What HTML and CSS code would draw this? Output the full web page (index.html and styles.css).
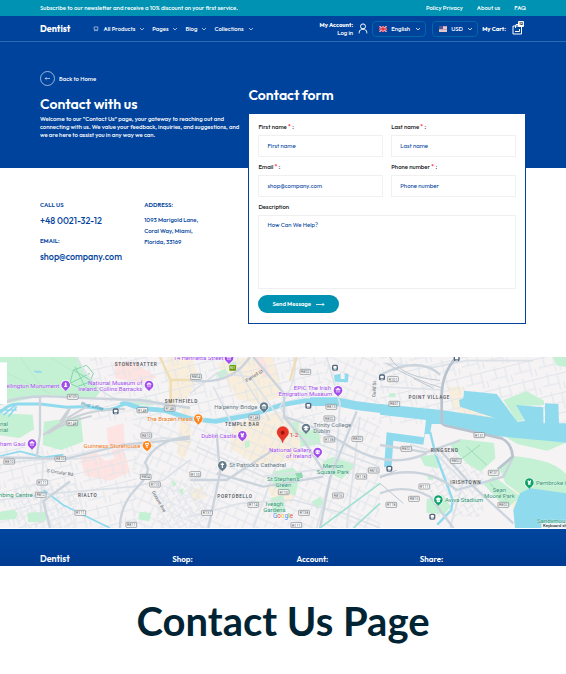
FILE: index.html
```html
<!DOCTYPE html>
<html lang="en">
<head>
<meta charset="utf-8">
<meta name="viewport" content="width=device-width, initial-scale=1">
<title>Contact Us - Dentist</title>
<link rel="stylesheet" href="styles.css">
</head>
<body>
<svg class="sprite" aria-hidden="true">
  <symbol id="chevron" viewBox="0 0 6 6"><path d="M1 2l2 2 2-2" fill="none" stroke="currentColor" stroke-width=".8"/></symbol>
</svg>

<div class="promo">
  <p>Subscribe to our newsletter and receive a 10% discount on your first service.</p>
  <nav class="promo-links" aria-label="Information">
    <a href="#">Policy Privacy</a><a href="#">About us</a><a href="#">FAQ</a>
  </nav>
</div>

<header class="header">
  <a class="logo" href="#">Dentist</a>
  <nav class="menu" aria-label="Main">
    <button type="button"><svg class="tooth" viewBox="0 0 8 8"><path d="M1.500 1.200h5v3.600h-.7v1.600H5V5.200H3v1.200h-.8V4.800h-.7z" fill="none" stroke="currentColor" stroke-width=".7"/></svg>All Products<svg class="chev"><use href="#chevron"/></svg></button>
    <button type="button">Pages<svg class="chev"><use href="#chevron"/></svg></button>
    <button type="button">Blog<svg class="chev"><use href="#chevron"/></svg></button>
    <button type="button">Collections<svg class="chev"><use href="#chevron"/></svg></button>
  </nav>
  <div class="tools">
    <a class="account" href="#">
      <span><b>My Account:</b><br>Log in</span>
      <svg viewBox="0 0 10 11"><g fill="none" stroke="currentColor" stroke-width="1"><circle cx="5" cy="3.400" r="2.500"/><path d="M1.200 10.400V9.600C1.200 7.200 3 6.200 5 6.200s3.800 1 3.800 3.400v.8"/></g></svg>
    </a>
    <label class="picker">
      <svg class="flag" viewBox="0 0 16 12"><path fill="#29337a" d="M0 0h16v12H0z"/><path d="M0 0l16 12M16 0L0 12" stroke="#fff" stroke-width="2.600"/><path d="M0 0l16 12M16 0L0 12" stroke="#d8213b" stroke-width="1.200"/><path d="M8 0v12M0 6h16" stroke="#fff" stroke-width="4.400"/><path d="M8 0v12M0 6h16" stroke="#d8213b" stroke-width="2.600"/></svg>
      <select class="language" aria-label="Language"><option>English</option></select>
      <svg class="chev bold"><use href="#chevron"/></svg>
    </label>
    <label class="picker second">
      <svg class="flag" viewBox="0 0 16 12"><path fill="#eee" d="M0 0h16v12H0z"/><path d="M0 1h16M0 4h16M0 7h16M0 10h16" stroke="#c98a96" stroke-width="1.500"/><path fill="#4b5a94" d="M0 0h8v6H0z"/></svg>
      <select class="currency" aria-label="Currency"><option>USD</option></select>
      <svg class="chev bold"><use href="#chevron"/></svg>
    </label>
    <a class="cart" href="#"><b>My Cart:</b>
      <span class="bag"><svg viewBox="0 0 11 12"><g fill="none" stroke="currentColor"><path d="M1 3h8.500v8H1z"/><path d="M3.500 5V2.500C3.500 1 6.500 1 6.500 2.500M3 8.500h4.500V6"/></g></svg><span class="count">12</span></span>
    </a>
  </div>
</header>

<main class="contact">
  <section class="intro">
    <a class="back" href="#"><svg viewBox="0 0 15 15"><circle cx="7.500" cy="7.500" r="7" fill="none" stroke="currentColor" stroke-width=".6"/><path d="M10 7.500H5.200M6.500 6.200L5.200 7.500l1.300 1.300" fill="none" stroke="currentColor" stroke-width=".6"/></svg>Back to Home</a>
    <h1>Contact with us</h1>
    <p class="lead">Welcome to our "Contact Us" page, your gateway to reaching out and connecting with us. We value your feedback, inquiries, and suggestions, and we are here to assist you in any way we can.</p>
    <div class="details">
      <dl>
        <dt>CALL US</dt><dd><a href="#">+48 0021-32-12</a></dd>
        <dt>EMAIL:</dt><dd><a href="#">shop@company.com</a></dd>
      </dl>
      <dl>
        <dt>ADDRESS:</dt><dd class="address">1093 Marigold Lane,<br>Coral Way, Miami,<br>Florida, 33169</dd>
      </dl>
    </div>
  </section>

  <section class="form-side">
    <h2>Contact form</h2>
    <form class="card">
      <div class="field"><label for="first">First name <sup>*</sup> :</label><input id="first" type="text" placeholder="First name"></div>
      <div class="field"><label for="last">Last name <sup>*</sup> :</label><input id="last" type="text" placeholder="Last name"></div>
      <div class="field"><label for="email">Email <sup>*</sup> :</label><input id="email" type="email" placeholder="shop@company.com"></div>
      <div class="field"><label for="phone">Phone number <sup>*</sup> :</label><input id="phone" type="tel" placeholder="Phone number"></div>
      <div class="field wide"><label for="text">Description</label><textarea id="text" placeholder="How Can We Help?"></textarea></div>
      <button class="send" type="button">Send Message<svg viewBox="0 0 9 5"><path d="M0 2.500h8M6.500 1L8 2.500 6.500 4" fill="none" stroke="currentColor" stroke-width=".8"/></svg></button>
    </form>
  </section>
</main>

<svg class="map" viewBox="0 21 1698 513" preserveAspectRatio="xMidYMid slice" role="img" aria-label="Map of Dublin">
  <defs>
    <pattern id="streets-a" width="74" height="58" patternUnits="userSpaceOnUse" patternTransform="rotate(-14)"><path d="M0 10h74M0 38h50M20 0v38M50 10v48M64 38v20" class="street"/></pattern>
    <pattern id="streets-b" width="62" height="66" patternUnits="userSpaceOnUse" patternTransform="rotate(24)"><path d="M0 12h62M12 12v54M38 0v40M0 40h62M54 40v26" class="street"/></pattern>
    <pattern id="streets-c" width="34" height="40" patternUnits="userSpaceOnUse" patternTransform="rotate(58)"><path d="M0 8h34M8 8v32M24 0v24M8 26h26" class="street"/></pattern>
    <g id="tag"><rect x="-16" y="-8" width="32" height="15" rx="2" fill="#fff" stroke="#777d84" stroke-width="2"/></g>
    <g id="pin"><circle r="15" fill="#fff"/><path d="M-8 10L0 18l8-8z" fill="currentColor"/><circle r="13" fill="currentColor"/></g>
    <g id="museum"><use href="#pin"/><path d="M-7-2L0-7l7 5zM-6 5H6M-4-2v6M0-2v6M4-2v6" fill="#fff" stroke="#fff" stroke-width="1.500"/></g>
    <g id="tower"><use href="#pin"/><path d="M0-9l3 5-1 5 4 5h-12l4-5-1-5z" fill="#fff"/></g>
    <g id="castle"><use href="#pin"/><path d="M-5-7h3v2h4v-2h3v5l-2 2 1 6h-8l1-6-2-2z" fill="#fff"/></g>
    <g id="palette"><use href="#pin"/><circle r="7" fill="#fff"/><path d="M-3-3h2M2-3h2M-4 1h2M2 2h4" stroke="currentColor" stroke-width="2.500"/></g>
    <g id="campus"><use href="#pin"/><path d="M-9-2L0-7l9 5-9 5zM-5 2v4q5 3 10 0V2" fill="#fff"/></g>
    <g id="food"><use href="#pin"/><path d="M-6-6H6M-4-6v3q0 4 4 4t4-4v-3M0 0v8" fill="none" stroke="#fff" stroke-width="3"/></g>
    <g id="sight"><use href="#pin"/><path d="M0-8V8M-5-3H5" stroke="#fff" stroke-width="3.500"/></g>
    <g id="stop"><rect x="-9" y="-9" width="18" height="18" rx="5" fill="#52677d"/><rect x="-5" y="-5" width="10" height="8" rx="2" fill="#fff"/><path d="M-4 6h8" stroke="#fff" stroke-width="2"/></g>
  </defs>
  <path fill="#f5f3f4" d="M0 21h1698v513H0z"/>

  <g fill="#f9eedc">
    <path d="M500 21h75l20 60-30 60-55 20zM650 40l105-19h60l20 50 10 70-75 20-60-15zM700 225l130-40 80 45-20 100-120 15-80-50zM545 170l25 0 5 110-25 50-20-20zM1340 110h50l-10 58 105 36-100-12-25-20z"/>
    <path d="M800 410l50-20 40 30-20 40-50-10zM570 420l35-10 15 30-40 15zM1530 440l20-40 20 20-30 60z"/>
  </g>
  <g fill="#fde3e1"><path d="M345 35h55l70 45-35 20-90-15zM320 235l50-15 5 75-50-5zM240 320l50-12 25 25 30-8-12-25 37-8 20 75-60 25-75-15zM1040 345l20-12 8 25-22 8zM760 21h30l20 50-20 10z"/></g>

  <path fill="url(#streets-a)" d="M270 21h700v190H270zM0 290h410v244H0zM1140 21h558v200h-558z"/>
  <path fill="url(#streets-b)" d="M400 200h740v334H400zM970 21h170v150H970z"/>
  <path fill="url(#streets-c)" d="M40 400h190v134H40zM470 400h150v134H470zM1290 300h160v200h-160z"/>

  <g fill="#c4f0d3">
    <path d="M0 21h234l16 42 50 62-14 20-150-10L0 166z"/>
    <path d="M0 190l98 4 4 44-44 26-58-8zM132 215l110-15 8 75-66 25-56-15zM0 485l40-6 14 10-8 18-46 4zM82 488l50-2 14 14-16 16h-46zM382 150l70-2 8 18-80-2z"/>
    <path d="M898 244l58-8 6 46-60 8zM876 218l20-6 0 38-18 0zM818 365l60-12 22 20-14 64-68-30zM968 335l30-15 70 25-42 42-58-26zM812 445l38-10 6 50-36 8zM935 455l25-14 14 18-24 18zM420 485l34 4-6 25-34-6z"/>
    <path d="M1260 320l48-8 8 43-42-8zM1350 285l30-18 102 12 4 46-44 40-42-25zM1450 402l30-24 82 62-42 36zM1280 448l50-12 22 34-18 22-55-4z"/>
    <path d="M1497 352l37-35q50 5 90 15 45 10 74 40v80l-108-35-22 20-52-38zM1510 150l70-26 52 28v13l-82 4 22 42-22 2zM1502 252l196 26-56 24-90-20zM1658 21h40v30l-28-5zM1168 130h18v12h-18zM1283 375h16v14h-16z"/>
    <path d="M645 70l30-14 10 15-25 15zM690 40l18-6 4 16-18 4zM735 275l14-4 0 20-14 4zM515 390l15 10-10 12zM535 420l15-5v20zM835 440l12 4-6 10z"/>
  </g>
  <g fill="none" stroke="#86d6ae" stroke-width="3"><path d="M210 100l10-40 40-14 20 24-10 26-40 14zM220 60l50 30M210 100l60-30M225 50l30 60"/><path d="M0 60l150 70M60 21l80 110M150 21l80 50" stroke="#a9dfc0" stroke-width="1"/></g>
  <path d="M885 370l20-5 4 18-16 4z" fill="#8ed9b0"/>
  <path d="M1380 330l60-45M1400 290l60 55M1470 400l50 50" stroke="#9cdcb5" stroke-width="3"/>

  <g fill="none" stroke="#90daee">
    <path d="M0 188q25-28 60-26l60 0 80 10q70-6 110 8 40-2 62-20" stroke-width="9"/>
    <path d="M362 164l14-5 46 16 70 6 80 25 75 8 110-20 90-30 70-12 70 4 60 10 100 10" stroke-width="14"/>
    <path d="M930 155l80 0 60 12 80 10" stroke-width="26"/>
    <path d="M1290 245l16 65 30 80 22 60-4 30-42 44" stroke-width="7"/>
    <path d="M0 318l60-14 70 18 60-8M130 420l60 45 80 40 60 29" stroke-width="5"/>
    <path d="M0 180l50 0M10 195l40-32M25 200l25-30" stroke-width="5"/>
  </g>
  <path fill="#90daee" d="M1140 162l185 18 160 24-105-34-3-20 13-5 2-23 98 10 62 83 23-2-27-48 82 7v48h5v-60l40 2 2 58h21v58l-58-6-155-14-165-36h-25l-5 30h-15l-5 32-90-12-5 75-23 5 8-105 112 15 6-52-138-16zM1698 430l-108-15-30 15-20 50 5 54h153zM1002 75l20-4v16l12 0v-18l12 4-2 24-40-2z"/>
  <path d="M100 62l22 0 5 6-20 0z" fill="#90daee"/>

  <g fill="none" stroke="#dce2e8" stroke-width="5">
    <path d="M0 345q90-20 190-18t220-40q70-40 160-10M130 320l-10 200M0 450l160-20 240-20 90-20 80-60M230 21q60 120 140 130t200 20"/>
    <path d="M570 130l80-60 100 10 100 140M640 110l60 120M690 21l120 190M880 21q20 60-40 150l60 90 240 90M980 21l40 140-10 150-60 223"/>
    <path d="M570 500l150-40 160-10 150 40 110 44M590 290l200 90 230-30M760 534l70-190M1080 200l-40 334M1150 40l150 12 100-20h200M1140 110l190 10M1350 534l40-140-90-90-70-20"/>
  </g>
  <g fill="none" stroke="#cbd4dd" stroke-width="7">
    <path d="M120 140l0 112-10 70M0 160q80-26 170-20t250 10l150 24M0 322l200 4 170-42 200-18M150 534l-20-80 80-60M360 534q0-70 50-120t25-75q30-70 135-80"/>
    <path d="M570 90q120 20 180-69M760 21l92 110 0 70 58 70 60 90M650 250l10 120-35 164M650 370l140 40 180-30M850 200q80 20 200 90t230 20M570 390l110 0 140-90M960 534l30-150 80-200"/>
    <path d="M1140 380q130-40 230 40l140-40 30-60M1140 430q80-30 150 10l70 94M1320 300l90 100 130 120M1140 75q120-60 180 0M1140 285l140 22 100-36"/>
  </g>
  <path d="M480 21l32 70v85M512 90h58M890 21l-20 70" fill="none" stroke="#f1ddb3" stroke-width="7"/>
  <g fill="none" stroke="#c0c8d1">
    <path d="M130 255q100-80 245-78M140 250q40-10 70-75M145 250q40-30 130-52M200 205l60-35M180 215l30-42" stroke="#ccd1d7" stroke-width="6"/>
    <path d="M1370 21q-48 50-45 130v66q0 10 30 14l150 34q30 15 33 55l-45 38" stroke="#b9c3ce" stroke-width="8"/>
    <path d="M1170 21q30 60 150 70M1160 40q80 50 170 75M1240 85l60 30M1140 384l50-24M1140 400l70 60" stroke-width="3"/>
  </g>
  <path d="M1140 460l-80 74M1140 400l-180 134" fill="none" stroke="#9fe2d1" stroke-width="5"/>

  <g fill="#a24bec" color="#a24bec" class="place">
    <text x="178" y="113" class="end">ellington Monument</text><text x="427" y="104" class="end">National Museum of</text><text x="427" y="122" class="end">Ireland, Collins Barracks</text>
    <text x="0" y="287">ham Gaol</text><text x="520" y="30">14 Henrietta Street</text><text x="709" y="263" class="end">Dublin Castle</text>
    <text x="993" y="121" class="end">EPIC The Irish</text><text x="997" y="139" class="end">Emigration Museum</text><text x="934" y="306" class="end">National Gallery</text><text x="934" y="323" class="end">of Ireland</text>
    <use href="#tower" x="197" y="105"/><use href="#museum" x="447" y="105"/><use href="#museum" x="96" y="281"/><use href="#museum" x="687" y="24"/><use href="#castle" x="727" y="256"/><use href="#museum" x="1014" y="121"/><use href="#palette" x="953" y="306"/>
  </g>
  <g fill="#ed7715" color="#ff851b" class="place"><text x="440" y="213">The Brazen Head</text><text x="421" y="294" class="end">Guinness Storehouse</text><use href="#food" x="595" y="206"/><use href="#food" x="441" y="286"/></g>
  <g fill="#60737d" color="#647b8b" class="place"><text x="772" y="177" class="end">Ha'penny Bridge</text><text x="940" y="231">Trinity College</text><text x="940" y="249">Dublin</text><text x="688" y="352">St Patrick's Cathedral</text><use href="#museum" x="792" y="170"/><use href="#campus" x="918" y="234"/><use href="#sight" x="667" y="346"/></g>
  <g fill="#259370" color="#0fa36b" class="place">
    <text x="98" y="441" class="end">nbing Centre</text><text x="0" y="227">nal</text><text x="0" y="246">rial</text><text x="850" y="393" class="mid">St Stephen's</text><text x="850" y="411" class="mid">Green</text><text x="999" y="355" class="mid">Merrion</text><text x="999" y="372" class="mid">Square Park</text><text x="823" y="468" class="mid">Iveagh</text><text x="823" y="486" class="mid">Gardens</text>
    <text x="1335" y="456">Aviva Stadium</text><text x="1498" y="425" class="mid">Sean</text><text x="1498" y="443" class="mid">Moore Park</text><text x="1608" y="405">Pembroke G</text><text x="1611" y="519">Sandymou</text>
    <use href="#castle" x="1588" y="398"/><use href="#campus" x="1315" y="449"/>
  </g>
  <g class="district"><text x="408" y="48">STONEYBATTER</text><text x="544" y="159">SMITHFIELD</text><text x="263" y="442">RIALTO</text><text x="727" y="229">TEMPLE BAR</text><text x="705" y="445">PORTOBELLO</text><text x="1288" y="146">POINT VILLAGE</text><text x="1334" y="305">RINGSEND</text><text x="1397" y="402">IRISHTOWN</text></g>
  <g class="road"><text transform="translate(140 366) rotate(9)">S Circular Rd</text><text transform="translate(242 164) rotate(14)" fill="#268aa7">River Liffey</text><text transform="translate(740 97) rotate(-32)">Parnell St</text><text transform="translate(455 426) rotate(60)">Donore Ave</text><text transform="translate(1126 142) rotate(-87)">Guild St</text></g>

  <g class="tags">
    <use href="#tag" x="218" y="141"/><text x="218" y="145">R109</text><use href="#tag" x="217" y="220"/><text x="217" y="224">R148</text><use href="#tag" x="427" y="181"/><text x="427" y="185">R148</text><use href="#tag" x="509" y="176"/><text x="509" y="180">R148</text><use href="#tag" x="439" y="257"/><text x="439" y="261">R810</text><use href="#tag" x="181" y="327"/><text x="181" y="331">R810</text><use href="#tag" x="28" y="335"/><text x="28" y="339">R810</text><use href="#tag" x="127" y="398"/><text x="127" y="402">R111</text><use href="#tag" x="122" y="435"/><text x="122" y="439">R812</text><use href="#tag" x="241" y="489"/><text x="241" y="493">R111</text><use href="#tag" x="437" y="381"/><text x="437" y="385">R804</text><use href="#tag" x="465" y="404"/><text x="465" y="408">R110</text><use href="#tag" x="394" y="525"/><text x="394" y="529">R811</text>
    <use href="#tag" x="588" y="81"/><text x="588" y="85">R804</text><use href="#tag" x="916" y="66"/><text x="916" y="70">R802</text><use href="#tag" x="763" y="203"/><text x="763" y="207">R148</text><use href="#tag" x="994" y="171"/><text x="994" y="175">R813</text><use href="#tag" x="988" y="206"/><text x="988" y="210">R802</text><use href="#tag" x="988" y="269"/><text x="988" y="273">R138</text><use href="#tag" x="1072" y="267"/><text x="1072" y="271">R802</text><use href="#tag" x="586" y="373"/><text x="586" y="377">R110</text><use href="#tag" x="851" y="427"/><text x="851" y="431">R110</text><use href="#tag" x="760" y="465"/><text x="760" y="469">R114</text><use href="#tag" x="621" y="489"/><text x="621" y="493">R137</text><use href="#tag" x="912" y="489"/><text x="912" y="493">R138</text><use href="#tag" x="1014" y="437"/><text x="1014" y="441">R816</text><use href="#tag" x="1084" y="380"/><text x="1084" y="384">R118</text><use href="#tag" x="1121" y="362"/><text x="1121" y="366">R815</text><use href="#tag" x="889" y="526"/><text x="889" y="530">R111</text>
    <use href="#tag" x="1179" y="88"/><text x="1179" y="92">R101</text><use href="#tag" x="1183" y="162"/><text x="1183" y="166">R801</text><use href="#tag" x="1438" y="256"/><text x="1438" y="260">R131</text><use href="#tag" x="1219" y="297"/><text x="1219" y="301">R802</text><use href="#tag" x="1367" y="333"/><text x="1367" y="337">R802</text><use href="#tag" x="1481" y="369"/><text x="1481" y="373">R131</text><use href="#tag" x="1273" y="410"/><text x="1273" y="414">R111</text><use href="#tag" x="1242" y="447"/><text x="1242" y="451">R815</text><use href="#tag" x="1174" y="465"/><text x="1174" y="469">R118</text><use href="#tag" x="1510" y="465"/><text x="1510" y="469">R802</text>
  </g>
  <rect x="688" y="45" width="20" height="17" rx="2" fill="#6c9c0d"/><text x="698" y="58" class="route">N1</text>
  <use href="#stop" x="347" y="184"/><use href="#stop" x="925" y="167"/><use href="#stop" x="1005" y="53"/><use href="#stop" x="1146" y="82"/><use href="#stop" x="1168" y="356"/><use href="#stop" x="1297" y="500"/><use href="#stop" x="1370" y="25"/>
  <path d="M848 279c-2-12-17-21-17-32a17 17 0 0 1 35 0c0 11-16 20-18 32z" fill="#e93428" stroke="#c5221f" stroke-width="1"/><circle cx="848" cy="248" r="6" fill="#9b1912"/>
  <text x="869" y="261" class="here">1-2</text>
  <text x="819" y="505" class="brand"><tspan fill="#4285f4">G</tspan><tspan fill="#ea4335">o</tspan><tspan fill="#f2b90b">o</tspan><tspan fill="#4285f4">g</tspan><tspan fill="#34a853">l</tspan><tspan fill="#ea4335">e</tspan></text>
  <path d="M1624 519h74v15h-74z" fill="#e9f3f5"/>
  <text x="1629" y="531" class="keys">Keyboard sh</text>
  <path d="M0 37h21v125H0z" fill="#fff"/>
</svg>

<footer class="footer">
  <a class="footer-logo" href="#">Dentist</a><h3>Shop:</h3><h3>Account:</h3><h3>Share:</h3>
</footer>
<p class="caption">Contact Us Page</p>
</body>
</html>
```
FILE: styles.css
```css
* { box-sizing: border-box; }
body { margin: 0; background: #fff; color: #fff; font: 500 6px/8px Outfit, Lato, sans-serif; }
h1, h2, h3, p, dl, dd { margin: 0; }
a { color: inherit; text-decoration: none; }
button, input, select, textarea { font: inherit; color: inherit; margin: 0; }
svg { display: block; flex: none; }
.sprite { position: absolute; width: 0; height: 0; }

.promo { display: flex; justify-content: space-between; align-items: center; height: 16px; padding: 0 40px; background: #0092b2; }
.promo-links { display: flex; gap: 14px; }

.header { display: flex; align-items: center; height: 26px; padding: 0 43px 0 40px; background: #00439c; border-bottom: 1px solid #3069b0; }
.logo { font-size: 9px; line-height: 12px; font-weight: 700; margin-right: 23px; }
.menu { display: flex; gap: 7px; }
.menu button { display: flex; align-items: center; gap: 4px; padding: 0; border: 0; background: none; }
.tooth { width: 6px; height: 6px; }
.chev { width: 6px; height: 6px; opacity: .8; }
.chev.bold { opacity: 1; stroke-width: 2; }
.tools { display: flex; align-items: center; margin-left: auto; gap: 4px; }
.account { display: flex; align-items: center; gap: 5px; text-align: right; }
.account svg { width: 10px; height: 11px; }
.account b, .cart b { font-weight: 700; }
.picker { display: flex; align-items: center; gap: 4px; height: 16px; padding: 0 4px 0 6px; border: 1px solid #0068a5; border-radius: 4px; }
.second { margin-left: 2px; }
.picker select { appearance: none; padding: 0; border: 0; background: transparent; }
.language { width: 20px; }
.currency { width: 12px; }
.flag { width: 8px; height: 6px; }
.cart { display: flex; align-items: center; gap: 6px; }
.bag { position: relative; }
.bag svg { width: 11px; height: 12px; }
.count { position: absolute; top: -2px; right: -1px; padding: 0 1px; border-radius: 1px; background: #fff; color: #111; font-size: 4px; line-height: 6px; font-weight: 700; }

.contact { display: grid; grid-template-columns: minmax(0, 208fr) minmax(0, 277fr); padding: 0 40px 33px; background: linear-gradient(#00439c 126px, #fff 126px); }
.intro { padding-top: 29px; }
.back { display: flex; align-items: center; gap: 4px; }
.back svg { width: 15px; height: 15px; }
h1, h2 { font-size: 14px; line-height: 18px; font-weight: 600; }
h1 { margin-top: 9px; }
.lead { margin-top: 2px; padding-right: 4px; }
.details { display: grid; grid-template-columns: 1fr 1fr; margin-top: 62px; color: #00439c; }
dd { margin-top: 7px; font-size: 9px; line-height: 10px; font-weight: 500; }
dt { font-weight: 600; }
dd + dt { margin-top: 11px; }
dd.address { margin-top: 6px; font-size: 6px; line-height: 11px; }

.form-side { padding-top: 44px; }
.card { display: grid; grid-template-columns: 1fr 1fr; gap: 6px 8px; margin-top: 9px; padding: 9px 9px 10px; border: 1px solid #00439c; background: #fff; color: #171717; }
.field { display: grid; gap: 4px; }
.field label { line-height: 8px; }
sup { color: #f22; font-size: 6px; line-height: 0; vertical-align: 1px; }
.wide { grid-column: 1 / -1; }
.field input, .field textarea { width: 100%; min-width: 0; border: 1px solid #f0f0f0; border-radius: 0; background: #fff; padding: 0 8px; color: #00439c; font-weight: 400; outline: 0; }
.field input { height: 22px; }
.field textarea { display: block; height: 74px; padding: 5px 8px; resize: none; }
::placeholder { color: #00439c; opacity: 1; }
.send { display: flex; align-items: center; gap: 5px; justify-self: start; height: 18px; padding: 0 14px; border: 0; border-radius: 9px; background: #0092b2; color: #fff; font-weight: 600; }
.send svg { width: 9px; height: 5px; }

.map { width: 100%; height: 171px; }
.street { fill: none; stroke: #e1e5ea; stroke-width: 3; }
.map text { font-family: Roboto, sans-serif; font-weight: 400; }
.place text { font-size: 18px; stroke: #fff; stroke-width: 1px; paint-order: stroke; }
.place .end { text-anchor: end; }
.place .mid { text-anchor: middle; }
.district { fill: #4d5258; text-anchor: middle; letter-spacing: 2px; }
.map .district text { font-size: 14px; font-weight: 500; }
.road text { font-size: 14px; }
.road { fill: #59636b; }
.tags { fill: #4f555b; text-anchor: middle; }
.tags text { font-size: 11px; }
.route { fill: #fff; font-size: 12px; text-anchor: middle; }
.here { fill: #d93025; font-size: 18px; }
.brand { font-size: 19px; stroke: #fff; stroke-width: 2px; paint-order: stroke; }
.keys { font-size: 13px; fill: #000; }

.footer { display: grid; grid-template-columns: 132fr 124fr 123fr 106fr; align-items: center; height: 37px; margin-top: 1px; padding: 23px 40px 0; background: linear-gradient(#00459e, #003c91); }
.footer h3, .footer-logo { font-size: 8px; line-height: 10px; font-weight: 600; }
.footer-logo { font-size: 9px; }
.caption { padding: 30px 0 27px; text-align: center; color: #002433; font: 700 40px/51px Lato, sans-serif; }
```
